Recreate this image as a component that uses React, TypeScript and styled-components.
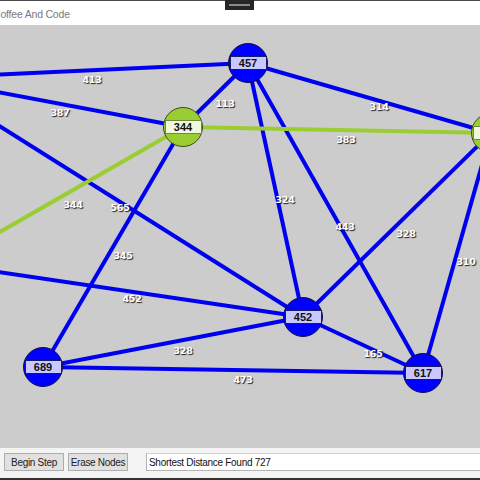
import React from "react";
import styled, { createGlobalStyle } from "styled-components";

type NodeKind = "plain" | "path";

interface IGraphNode {
  id: string;
  label: string;
  x: number;
  y: number;
  kind: NodeKind;
}

interface IGraphEdge {
  from: string;
  to: string;
  kind: NodeKind;
}

interface IEdgeLabel {
  text: string;
  x: number;
  y: number;
}

// canvas coordinates (canvas starts under the title bar)
const nodes: IGraphNode[] = [
  { id: "L1", label: "", x: -77, y: 53, kind: "plain" },
  { id: "L2", label: "", x: -56, y: 239, kind: "path" },
  { id: "A", label: "457", x: 248, y: 38, kind: "plain" },
  { id: "B", label: "344", x: 183, y: 102, kind: "path" },
  { id: "C", label: "273", x: 491, y: 108, kind: "path" },
  { id: "D", label: "452", x: 303, y: 292, kind: "plain" },
  { id: "E", label: "689", x: 43, y: 342, kind: "plain" },
  { id: "F", label: "617", x: 423, y: 348, kind: "plain" },
];

const edges: IGraphEdge[] = [
  { from: "L1", to: "A", kind: "plain" },
  { from: "L1", to: "B", kind: "plain" },
  { from: "L1", to: "D", kind: "plain" },
  { from: "L2", to: "D", kind: "plain" },
  { from: "A", to: "B", kind: "plain" },
  { from: "A", to: "C", kind: "plain" },
  { from: "A", to: "D", kind: "plain" },
  { from: "A", to: "F", kind: "plain" },
  { from: "B", to: "E", kind: "plain" },
  { from: "C", to: "D", kind: "plain" },
  { from: "C", to: "F", kind: "plain" },
  { from: "D", to: "E", kind: "plain" },
  { from: "D", to: "F", kind: "plain" },
  { from: "E", to: "F", kind: "plain" },
  { from: "L2", to: "B", kind: "path" },
  { from: "B", to: "C", kind: "path" },
];

const edgeLabels: IEdgeLabel[] = [
  { text: "413", x: 92, y: 54 },
  { text: "387", x: 60, y: 87 },
  { text: "113", x: 225, y: 78 },
  { text: "314", x: 379, y: 81 },
  { text: "383", x: 346, y: 114 },
  { text: "344", x: 73, y: 179 },
  { text: "565", x: 120, y: 182 },
  { text: "324", x: 285, y: 174 },
  { text: "443", x: 345, y: 201 },
  { text: "328", x: 406, y: 208 },
  { text: "310", x: 466, y: 236 },
  { text: "345", x: 123, y: 230 },
  { text: "452", x: 132, y: 273 },
  { text: "328", x: 183, y: 325 },
  { text: "165", x: 373, y: 328 },
  { text: "473", x: 243, y: 354 },
];

const byId = (id: string) => nodes.find((n) => n.id === id)!;

function App() {
  return (
    <>
      <GlobalStyle />
      <Window>
        <TitleBar>
          <Title>Coffee And Code</Title>
          <SnapHandle />
        </TitleBar>
        <Canvas>
          <EdgeLayer width={480} height={423}>
            {edges.map((e, i) => {
              const a = byId(e.from);
              const b = byId(e.to);
              return (
                <line
                  key={i}
                  x1={a.x}
                  y1={a.y}
                  x2={b.x}
                  y2={b.y}
                  stroke={e.kind === "path" ? "#9acd32" : "#0000f0"}
                  strokeWidth={4}
                />
              );
            })}
          </EdgeLayer>
          {edgeLabels.map((l, i) => (
            <Weight key={i} style={{ left: l.x, top: l.y }}>
              {l.text}
            </Weight>
          ))}
          {nodes
            .filter((n) => n.label)
            .map((n) => (
              <Node key={n.id} $kind={n.kind} style={{ left: n.x, top: n.y }}>
                <NodeTag $kind={n.kind}>{n.label}</NodeTag>
              </Node>
            ))}
        </Canvas>
        <BottomBar>
          <Button>Begin Step</Button>
          <Button>Erase Nodes</Button>
          <StatusBox>Shortest Distance Found 727</StatusBox>
        </BottomBar>
      </Window>
    </>
  );
}

const GlobalStyle = createGlobalStyle`
  html, body {
    margin: 0;
    padding: 0;
    overflow: hidden;
  }
  body {
    font-family: "Liberation Sans", Arial, sans-serif;
  }
`;

const Window = styled.div`
  width: 480px;
  height: 480px;
  display: flex;
  flex-direction: column;
  overflow: hidden;
  background-color: #f4f4f4;
  border-bottom: 2px solid #333333;
  box-sizing: border-box;
`;

const TitleBar = styled.div`
  position: relative;
  height: 25px;
  flex-shrink: 0;
  display: flex;
  align-items: center;
  background-color: #ffffff;
  border-top: 1px solid #4a4a4a;
  box-sizing: border-box;
`;

const Title = styled.span`
  margin-left: -7px;
  margin-top: 1px;
  font-size: 10.5px;
  color: #7a7a7a;
  letter-spacing: -0.2px;
`;

const SnapHandle = styled.div`
  position: absolute;
  left: 225px;
  top: -1px;
  width: 29px;
  height: 10px;
  background-color: #262626;
  &::after {
    content: "";
    position: absolute;
    left: 4px;
    right: 4px;
    top: 4px;
    height: 2px;
    background-color: #8a8a8a;
  }
`;

const Canvas = styled.div`
  position: relative;
  flex: 1;
  background-color: #cccccc;
  overflow: hidden;
`;

const EdgeLayer = styled.svg`
  position: absolute;
  left: 0;
  top: 0;
`;

const Weight = styled.span`
  position: absolute;
  transform: translate(-50%, -50%);
  font-family: "DejaVu Sans", Verdana, sans-serif;
  font-weight: bold;
  font-size: 9.5px;
  color: #ffffff;
  text-shadow: 1px 1px 1px rgba(0, 0, 0, 0.85);
  letter-spacing: -0.3px;
  white-space: nowrap;
`;

const Node = styled.div<{ $kind: NodeKind }>`
  position: absolute;
  width: 40px;
  height: 40px;
  margin: -20px 0 0 -20px;
  box-sizing: border-box;
  border-radius: 50%;
  border: 1px solid ${(p) => (p.$kind === "path" ? "#3a4a1a" : "#10104a")};
  background-color: ${(p) => (p.$kind === "path" ? "#9acd32" : "#0000ff")};
  display: flex;
  align-items: center;
  justify-content: center;
`;

const NodeTag = styled.div<{ $kind: NodeKind }>`
  width: 37px;
  height: 14px;
  flex-shrink: 0;
  box-sizing: border-box;
  border: 1px solid ${(p) => (p.$kind === "path" ? "#6e8a3a" : "#1a1a6a")};
  background-color: ${(p) => (p.$kind === "path" ? "#eef8dc" : "#c8c8ff")};
  display: flex;
  align-items: center;
  justify-content: center;
  font-size: 11px;
  font-weight: bold;
  color: #111111;
`;

const BottomBar = styled.div`
  height: 30px;
  flex-shrink: 0;
  display: flex;
  align-items: flex-start;
  padding: 5px 0 0 4px;
  box-sizing: border-box;
  gap: 4px;
`;

const Button = styled.button`
  height: 18px;
  width: 60px;
  padding: 0;
  margin: 0;
  box-sizing: border-box;
  border: 1px solid #adadad;
  background-color: #e1e1e1;
  font-family: "Liberation Sans", Arial, sans-serif;
  font-size: 10px;
  letter-spacing: -0.3px;
  color: #222222;
`;

const StatusBox = styled.div`
  flex: 1;
  margin-left: 14px;
  margin-right: -4px;
  height: 18px;
  box-sizing: border-box;
  border: 1px solid #b4b4b4;
  border-top-color: #d0d0d0;
  background-color: #ffffff;
  padding-left: 2px;
  display: flex;
  align-items: center;
  font-size: 10px;
  letter-spacing: -0.3px;
  color: #111111;
`;

export default App;
